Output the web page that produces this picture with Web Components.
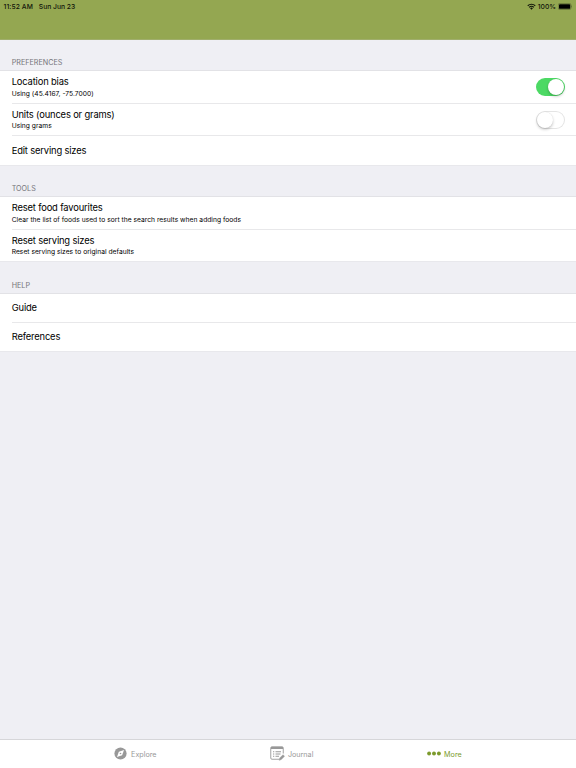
<!DOCTYPE html>
<html lang="en">
<head>
<meta charset="utf-8">
<title>More</title>
<style>
  html, body { margin: 0; height: 100%; }
  body {
    font-family: Inter, 'Liberation Sans', sans-serif;
    color: #000;
    background: #efeff4;
    overflow: hidden;
  }
</style>
</head>
<body>
<more-screen></more-screen>

<script>
'use strict';

/* Attach an open shadow root and fill it */
function shadow(el, html) {
  el.attachShadow({ mode: 'open' }).innerHTML = html;
}

/* ── <status-header> : green bar with the system status ── */
class StatusHeader extends HTMLElement {
  constructor() {
    super();
    shadow(this, `
      <style>
        :host {
          display: block;
          box-sizing: border-box;
          height: 40px;
          padding: 0 3px 0 3.6px;
          background: #94a751;
          border-bottom: 1px solid #a0ae6c;
          color: #11150a;
        }
        .bar { display: flex; align-items: center; height: 12px; font-size: 6.75px; font-weight: 500; white-space: nowrap; }
        .time { letter-spacing: .08px; }
        .date { margin-left: 5.8px; }
        .grow { flex: 1; }
        .wifi { width: 9px; height: 7px; margin-right: 2px; }
        .battery { width: 15px; height: 7px; margin-left: 2px; }
      </style>
      <div class="bar">
        <span class="time"><slot name="time"></slot></span>
        <span class="date"><slot name="date"></slot></span>
        <span class="grow"></span>
        <svg class="wifi" viewBox="0 0 18 14" fill="none" stroke="#11150a" stroke-width="2.2">
          <path d="M1.5 5.5a10.6 10.6 0 0 1 15 0M4.3 8.6a6.6 6.6 0 0 1 9.4 0"/>
          <path d="M9 13.4 6.2 10.6a4 4 0 0 1 5.6 0z" fill="#11150a" stroke="none"/>
        </svg>
        <span><slot name="charge"></slot></span>
        <svg class="battery" viewBox="0 0 30 14">
          <rect x=".5" y=".9" width="25.4" height="12.2" rx="3" fill="none" stroke="#4c572c"/>
          <rect x="2" y="2.3" width="22.4" height="9.4" rx="1.8" fill="#000"/>
          <path d="M27 5v4c1.4-.4 1.4-3.6 0-4z" fill="#4c572c"/>
        </svg>
      </div>
    `);
  }
}

/* ── <settings-group label> : caption and its rows ─────── */
class SettingsGroup extends HTMLElement {
  constructor() {
    super();
    shadow(this, `
      <style>
        :host { display: block; }
        .caption {
          box-sizing: border-box;
          display: flex;
          align-items: flex-end;
          height: 32px;
          padding: 0 0 4px 11.7px;
          font-size: 7.2px;
          line-height: 9px;
          color: #75757a;
        }
        :host(:first-child) .caption { height: 31px; }
        :host(:last-child) .caption { height: 33px; }
        .rows {
          background: #fff;
          box-shadow: 0 -1px 0 #e2e2e6, 0 1px 0 #e8e8ec;
        }
      </style>
      <div class="caption"></div>
      <div class="rows"><slot></slot></div>
    `);
  }
  connectedCallback() {
    this.shadowRoot.querySelector('.caption').textContent = this.getAttribute('label');
  }
}

/* ── <settings-row> : title, optional detail and control ─ */
class SettingsRow extends HTMLElement {
  constructor() {
    super();
    shadow(this, `
      <style>
        :host { display: block; padding-left: 11.7px; }
        .row {
          box-sizing: border-box;
          display: flex;
          align-items: center;
          height: var(--row-height, 29px);
          padding-right: 11.5px;
          border-bottom: 1px solid #e8e8ea;
        }
        :host([detail]) .row { height: 32px; }
        :host([detail]:first-child) .row { height: 33px; }
        :host(:last-child) .row { border-bottom: 0; }
        :host([detail]:last-child) .row { height: 31px; }
        .text { flex: 1; white-space: nowrap; }
        .title { font-size: 9.4px; line-height: 12px; letter-spacing: -.165px; }
        .detail { font-size: 6.7px; line-height: 8px; margin-top: 1.5px; letter-spacing: .018px; }
        .detail:empty { display: none; }
      </style>
      <div class="row">
        <div class="text">
          <div class="title"><slot></slot></div>
          <div class="detail"></div>
        </div>
        <slot name="control"></slot>
      </div>
    `);
  }
  connectedCallback() {
    this.shadowRoot.querySelector('.detail').textContent = this.getAttribute('detail') || '';
  }
}

/* ── <toggle-switch on> ────────────────────────────────── */
class ToggleSwitch extends HTMLElement {
  constructor() {
    super();
    shadow(this, `
      <style>
        :host {
          box-sizing: border-box;
          display: flex;
          width: 29px;
          height: 18px;
          padding: 1px;
          border-radius: 9px;
          background: #fff;
          box-shadow: inset 0 0 0 1px #e4e4e4;
        }
        :host([on]) { justify-content: flex-end; background: #4cd964; box-shadow: none; }
        i {
          width: 16px;
          height: 16px;
          border-radius: 50%;
          background: #fff;
          box-shadow: 0 1.5px 3px rgba(0, 0, 0, .22), 0 0 1px rgba(0, 0, 0, .12);
        }
      </style>
      <i></i>
    `);
  }
}

/* ── <tab-item> : icon beside label ────────────────────── */
class TabItem extends HTMLElement {
  constructor() {
    super();
    shadow(this, `
      <style>
        :host { display: flex; align-items: center; color: #999; font-size: 7.2px; white-space: nowrap; }
        :host([active]) { color: #7c9a2c; }
        ::slotted(svg) { display: block; margin-right: var(--icon-gap, 3.7px); }
        span { padding-top: 1px; }
      </style>
      <slot name="icon"></slot><span><slot></slot></span>
    `);
  }
}

/* ── <tab-bar> ─────────────────────────────────────────── */
class TabBar extends HTMLElement {
  constructor() {
    super();
    shadow(this, `
      <style>
        :host {
          box-sizing: border-box;
          display: grid;
          grid-template-columns: 155.5px 157px 1fr;
          height: 29px;
          padding: 0 0 .5px 114.4px;
          background: #fff;
          border-top: 1px solid #d6d6d9;
        }
      </style>
      <slot></slot>
    `);
  }
}

/* ── <more-screen> : the whole page ────────────────────── */
class MoreScreen extends HTMLElement {
  constructor() {
    super();
    shadow(this, `
      <style>
        :host { display: flex; flex-direction: column; height: 100vh; }
        main { flex: 1; }
      </style>
      <status-header>
        <span slot="time">11:52 AM</span>
        <span slot="date">Sun Jun 23</span>
        <span slot="charge">100%</span>
      </status-header>
      <main>
        <settings-group label="PREFERENCES">
          <settings-row detail="Using (45.4167, -75.7000)">Location bias<toggle-switch slot="control" on></toggle-switch></settings-row>
          <settings-row detail="Using grams">Units (ounces or grams)<toggle-switch slot="control"></toggle-switch></settings-row>
          <settings-row>Edit serving sizes</settings-row>
        </settings-group>
        <settings-group label="TOOLS">
          <settings-row detail="Clear the list of foods used to sort the search results when adding foods">Reset food favourites</settings-row>
          <settings-row detail="Reset serving sizes to original defaults">Reset serving sizes</settings-row>
        </settings-group>
        <settings-group label="HELP">
          <settings-row>Guide</settings-row>
          <settings-row style="--row-height: 28px">References</settings-row>
        </settings-group>
      </main>
      <tab-bar>
        <tab-item>
          <svg slot="icon" width="13" height="13" viewBox="0 0 26 26">
            <circle cx="13" cy="13" r="12.2" fill="#989898"/>
            <path d="M20 6l-3.7 10.3L6 20l3.7-10.3z" fill="#fff"/>
            <circle cx="13" cy="13" r="1.6" fill="#989898"/>
          </svg>Explore
        </tab-item>
        <tab-item style="--icon-gap: 3px">
          <svg slot="icon" width="15" height="15" viewBox="0 0 30 30" fill="none" stroke="#989898" stroke-width="1.8">
            <path d="M19 26.5H4A2.5 2.5 0 0 1 1.5 24V4A2.5 2.5 0 0 1 4 1.5h20A2.5 2.5 0 0 1 26.5 4v11"/>
            <path d="M2 4h24" stroke-width="4"/>
            <path d="M6 11.5h2.5M11 11.5h11M6 16h2.5M11 16h10M6 20.5h2.5M11 20.5h7" stroke-width="2"/>
            <path d="M18.5 28.5l1-4.5 6.5-6.5 3 3-6.5 6.5z" fill="#989898" stroke-width="1"/>
          </svg>Journal
        </tab-item>
        <tab-item active style="--icon-gap: 3.2px">
          <svg slot="icon" width="14" height="5" viewBox="0 0 28 10" fill="#7c9a2c">
            <circle cx="4.2" cy="5" r="3.9"/><circle cx="14" cy="5" r="3.9"/><circle cx="23.8" cy="5" r="3.9"/>
          </svg>More
        </tab-item>
      </tab-bar>
    `);
  }
}

customElements.define('status-header', StatusHeader);
customElements.define('settings-group', SettingsGroup);
customElements.define('settings-row', SettingsRow);
customElements.define('toggle-switch', ToggleSwitch);
customElements.define('tab-item', TabItem);
customElements.define('tab-bar', TabBar);
customElements.define('more-screen', MoreScreen);
</script>
</body>
</html>
